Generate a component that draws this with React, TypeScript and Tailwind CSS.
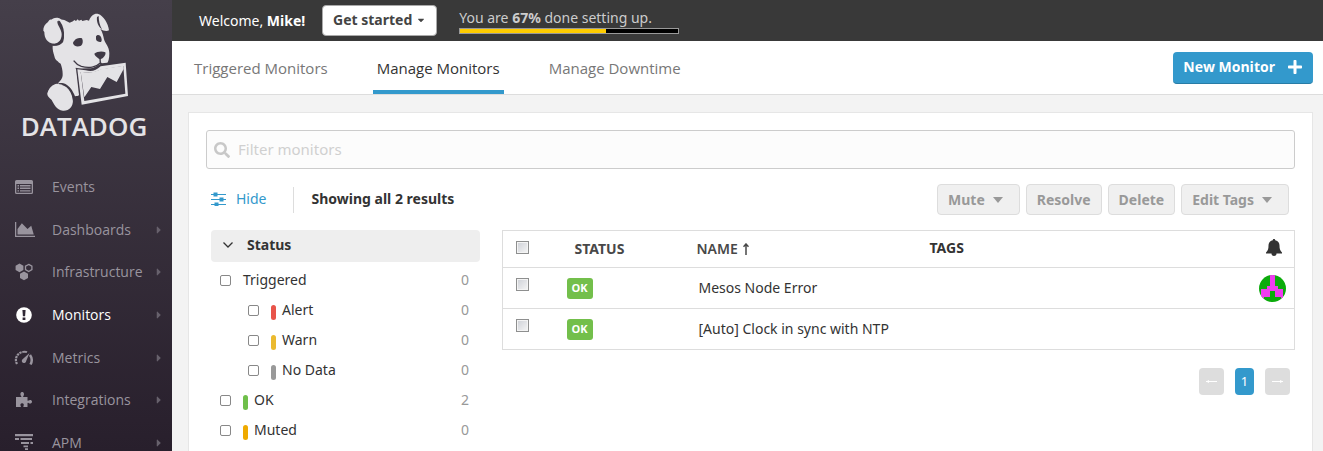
import type { ReactNode } from "react";
import { FaCaretDown, FaCaretRight, FaPlus, FaSearch } from "react-icons/fa";

function DogLogo() {
  return (
    <svg viewBox="126 36 270 300" className="ml-1 h-[100px] w-[90px]" fill="#e4e3e6" aria-hidden="true">
      <path d="M182 58 L196 60 L212 68 L222 64 L226 60 L231 63 L236 58 L240 62 L247 59 L250 63 L263 60 L270 62 C276 46 287 39 298 42 C312 46 328 70 330 91 C322 95 312 92 304 86 C311 97 313 108 315 118 C318 130 331 140 331 160 C331 176 328 186 322 194 L305 195 L309 189 C302 200 288 205 268 205 L230 206 L238 287 L228 289 C222 272 212 258 198 251 C190 248 182 249 176 251 C182 243 192 237 191 222 C191 210 188 200 185 191 C180 190 178 185 176 184 C170 181 167 174 166 168 C163 158 160 148 161 137 C172 139 188 136 193 124 C199 105 190 80 179 63 Z" />
      <path d="M178 54 C166 52 160 58 156 59 C152 58 150 62 147 66 C138 72 132 82 133 92 L136 96 C136 115 145 129 164 131 C179 131 188 120 188 103 C188 88 174 75 175 64 C178 62 184 60 188 61 C186 57 182 55 178 54 Z" />
      <path d="M180 64 C190 78 194 96 192 112 C189 128 176 136 162 134" fill="none" stroke="#3f3945" strokeWidth="5" />
      <path d="M178 254 C164 255 147 267 145 281 C145 290 153 294 158 300 C164 311 172 330 192 332 C211 333 222 320 222 300 C221 281 211 262 196 256 C190 253 184 253 178 254 Z" />
      <path d="M180 252 C204 251 221 274 224 304" fill="none" stroke="#3f3945" strokeWidth="4" />
      <path d="M146 282 C148 262 162 253 174 251 L190 254 L176 270 L160 300 Z" />
      <path d="M226 122 C231 114 241 112 249 115 C253 122 252 133 246 137 C237 141 226 140 223 132 C221 128 223 125 226 122 Z" fill="#3f3945" />
      <path d="M291 109 C295 103 300 104 304 108 C308 114 310 122 306 126 C300 127 292 124 291 118 Z" fill="#3f3945" />
      <path d="M286 161 C294 154 310 152 319 157 C322 164 313 176 304 178 C299 176 288 169 286 161 Z" fill="#3f3945" />
      <path d="M303 174 L304 189 C292 201 270 206 247 199 C235 195 229 189 224 182 M305 189 L309 194" fill="none" stroke="#3f3945" strokeWidth="4" />
      <path d="M294 51 C292 65 298 80 309 88 C302 77 299 61 299 48 Z" fill="#3f3945" />
      <path d="M230 203 L269 211 L309 190 L383 182 L391 289 L247 318 Z" fill="#3f3945" />
      <path fillRule="evenodd" d="M235 208 L260 211 C278 216 291 212 305 199 L380 188 L387 288 L248 314 Z M245 216 L256 303 L379 281 L373 198 L304 209 C287 218 268 219 245 216 Z" />
      <path d="M245 215 C269 219 287 218 304 208 L373 197 L374 207 L353 246 L325 231 L303 267 L277 261 L256 292 Z" />
      <path d="M226 207 L231 207 L240 286 L230 288 Z" />
    </svg>
  );
}

const glyph = "h-[18px] w-[20px]";

function EventsIcon() {
  return (
    <svg viewBox="0 0 20 18" className={glyph} fill="currentColor">
      <path fillRule="evenodd" d="M2.500 2h15A1.500 1.500 0 0 1 19 3.500v11a1.500 1.500 0 0 1-1.500 1.500h-15A1.500 1.500 0 0 1 1 14.500v-11A1.500 1.500 0 0 1 2.500 2zM2.300 6v8.700h15.400V6z" />
      <path d="M3.500 7H5v1.400H3.500zM6 7h10.500v1.400H6zM3.500 9.600H5V11H3.500zM6 9.600h10.500V11H6zM3.500 12.200H5v1.400H3.500zM6 12.200h10.500v1.400H6z" />
    </svg>
  );
}

function DashboardsIcon() {
  return (
    <svg viewBox="0 0 2048 1536" className="ml-px h-[15px] w-[20px]" fill="currentColor">
      <path d="M2048 1408v128H0V0h128v1408h1920zM1664 384l256 896H256V704l448-576 576 576z" />
    </svg>
  );
}

function InfrastructureIcon() {
  return (
    <svg viewBox="0 0 20 18" className={glyph} fill="currentColor">
      <path d="M5.500.500l3.900 2.200v4.200L5.500 9.200 1.600 6.900V2.700zM10 8.600l4 2.200v4.100l-4 2.300-4-2.300v-4.100z" />
      <path d="M14.700 1.400l3.200 1.800v3.400l-3.200 1.900-3.200-1.900V3.200z" fill="none" stroke="currentColor" strokeWidth="1.300" />
    </svg>
  );
}

function MonitorsIcon() {
  return (
    <svg viewBox="0 0 20 18" className={glyph}>
      <circle cx="10" cy="9" r="7.800" fill="currentColor" />
      <path d="M8.400 4h3.200l-.5 6.300H8.900zM8.600 11.500h2.800V14H8.600z" fill="#2f2735" />
    </svg>
  );
}

function MetricsIcon() {
  return (
    <svg viewBox="0 0 20 18" className={glyph} fill="none" stroke="currentColor">
      <path d="M3 15A8 8 0 0 1 9 3" strokeWidth="2.200" strokeDasharray="2.200 .8" />
      <path d="M9 3q2-.7 4 .2" strokeWidth="2" />
      <path d="M16 6q3.300 4.500.5 9.500" strokeWidth="2.500" />
      <path d="M15.500 4L12.200 12a2.200 2.200 0 1 1-3.600-1.800z" fill="currentColor" stroke="none" />
    </svg>
  );
}

function IntegrationsIcon() {
  return (
    <svg viewBox="0 0 20 18" className={glyph} fill="currentColor">
      <path d="M2 6h4.800c.6 0 .7-.5.3-1C5.800 3.500 6.400 1 8.200 1s2.400 2.500 1.200 4c-.4.500-.3 1 .3 1h3.800v3.200c0 .6.500.8 1 .4 1.500-1.200 3.500-.5 3.500 1.200s-2 2.400-3.500 1.200c-.5-.4-1-.2-1 .4V16H9.800c-.6 0-.7-.4-.4-.9.900-1.300.4-2.900-1.300-2.900s-2.200 1.600-1.300 2.900c.3.500.2.900-.4.900H2z" />
    </svg>
  );
}

function ApmIcon() {
  return (
    <svg viewBox="0 0 20 18" className={glyph} fill="currentColor">
      <path d="M1 0h18v2.200H1zM1 4h4v2H1zM6.500 4H18v2H6.500zM7 8h8v2H7zM16.500 8H19v2h-2.500zM9.500 11.500H14v1.800H9.500zM11 14.300h3V16h-3z" />
    </svg>
  );
}

function BellIcon() {
  return (
    <svg viewBox="0 0 16 17" className="h-[17px] w-[16px]" fill="currentColor" aria-hidden="true">
      <path d="M8 0c.8 0 1.200.5 1.200 1.200C12.300 1.700 13.500 4 13.500 6.500c0 3.500.5 5 2.500 7V14.500h-5.500a2.500 2.500 0 0 1-5 0H0V13.500c2-2 2.500-3.500 2.500-7 0-2.500 1.200-4.800 4.300-5.300C6.800.5 7.200 0 8 0z" />
    </svg>
  );
}

function SlidersIcon() {
  return (
    <svg viewBox="0 0 15 14" className="h-[14px] w-[15px]" fill="currentColor" aria-hidden="true">
      <path d="M0 2h15v1H0zM0 7h15v1H0zM0 12h15v1H0zM2.500.5h4v4h-4zM8.500 5.500h4v4h-4zM3.500 10.500h4V14h-4z" />
    </svg>
  );
}

type NavItem = { label: string; icon: ReactNode; arrow?: boolean; active?: boolean };

const navItems: NavItem[] = [
  { label: "Events", icon: <EventsIcon /> },
  { label: "Dashboards", icon: <DashboardsIcon />, arrow: true },
  { label: "Infrastructure", icon: <InfrastructureIcon />, arrow: true },
  { label: "Monitors", icon: <MonitorsIcon />, arrow: true, active: true },
  { label: "Metrics", icon: <MetricsIcon />, arrow: true },
  { label: "Integrations", icon: <IntegrationsIcon />, arrow: true },
  { label: "APM", icon: <ApmIcon />, arrow: true },
];

function Sidebar() {
  return (
    <aside className="flex w-[172px] shrink-0 flex-col overflow-hidden bg-linear-to-b from-[#453f4a] to-[#281f2c] font-['Open_Sans',sans-serif]">
      <a href="#home" className="flex h-[166px] shrink-0 flex-col items-center pt-3 pr-1">
        <DogLogo />
        <span className="text-[26px] leading-7 font-semibold text-[#e4e3e6]">DATADOG</span>
      </a>
      <nav className="grid h-[298px] shrink-0 grid-rows-7">
        {navItems.map((item) => (
          <a
            key={item.label}
            href={`#${item.label.toLowerCase()}`}
            className={
              item.active
                ? "flex items-center pr-[7px] pl-[14px] text-sm text-white"
                : "flex items-center pr-[7px] pl-[14px] text-sm text-[#99949e]"
            }
          >
            <span className="flex w-[38px] shrink-0 items-center">{item.icon}</span>
            <span className="flex-1">{item.label}</span>
            {item.arrow && <FaCaretRight className="size-3 shrink-0 text-[#67616c]" />}
          </a>
        ))}
      </nav>
    </aside>
  );
}

function TopBar() {
  return (
    <header className="flex h-[41px] shrink-0 items-center bg-[#393939] pl-[27px] text-sm text-white">
      <span className="w-[123px]">
        Welcome, <b>Mike!</b>
      </span>
      <button className="flex h-[31px] items-center gap-1 rounded border border-[#aaa] bg-white px-[10px] pb-[2px] font-bold text-[#444]">
        Get started <FaCaretDown className="size-[10px]" />
      </button>
      <div className="ml-[22px] w-[220px] text-[#ccc]">
        <p className="leading-5">
          You are <b>67%</b> done setting up.
        </p>
        <div
          role="progressbar"
          aria-label="Setup progress"
          aria-valuenow={67}
          className="h-[6px] border border-[#999] bg-black"
        >
          <div className="h-full w-[67%] bg-[#fc0]" />
        </div>
      </div>
    </header>
  );
}

function Tabs() {
  return (
    <div className="flex h-[54px] shrink-0 items-center justify-between border-b border-[#ddd] bg-white pr-[10px] pl-[18px] font-['Open_Sans',sans-serif]">
      <nav className="flex h-full gap-[41px] text-[15px] text-[#777]">
        <a href="#triggered" className="flex items-center border-b-4 border-transparent px-1 pt-[6px]">
          Triggered Monitors
        </a>
        <a href="#manage" className="flex items-center border-b-4 border-[#3399cc] px-1 pt-[6px] text-[#333]">
          Manage Monitors
        </a>
        <a href="#downtime" className="flex items-center border-b-4 border-transparent px-1 pt-[6px]">
          Manage Downtime
        </a>
      </nav>
      <button className="flex h-8 items-center gap-3 rounded border-b border-[#287ca6] bg-[#3399cc] px-[10px] text-sm font-bold text-white">
        New Monitor <FaPlus className="size-4" />
      </button>
    </div>
  );
}

type Facet = { label: string; count: number; bar?: string; nested?: boolean };

const facets: Facet[] = [
  { label: "Triggered", count: 0 },
  { label: "Alert", count: 0, bar: "bg-[#e8544a]", nested: true },
  { label: "Warn", count: 0, bar: "bg-[#ebba2f]", nested: true },
  { label: "No Data", count: 0, bar: "bg-[#999]", nested: true },
  { label: "OK", count: 2, bar: "bg-[#6fbf4a]" },
  { label: "Muted", count: 0, bar: "bg-[#efaa00]" },
];

function Facets() {
  return (
    <section className="ml-[5px] w-[269px] shrink-0">
      <button className="flex h-8 w-full items-center rounded-sm bg-[#eee] pb-[2px] pl-3 text-sm font-bold text-[#333]">
        <svg viewBox="0 0 10 6" className="mr-[14px] h-[6px] w-[10px]" fill="none" stroke="currentColor" strokeWidth="1.300">
          <path d="M.5.500L5 5 9.500.5" />
        </svg>
        Status
      </button>
      <ul className="pt-[3px]">
        {facets.map((facet) => (
          <li key={facet.label}>
            <label
              className={
                facet.nested
                  ? "flex h-[30px] items-center pr-[11px] pl-[37px] text-sm text-[#333]"
                  : "flex h-[30px] items-center pr-[11px] pl-[9px] text-sm text-[#333]"
              }
            >
              <input
                type="checkbox"
                className="mr-3 size-[11px] appearance-none rounded-xs border border-[#888] bg-white checked:bg-[#3399cc]"
              />
              {facet.bar && <span className={`mt-1 mr-[6px] h-[15px] w-[5px] rounded-full ${facet.bar}`} />}
              <span className="flex-1">{facet.label}</span>
              <span className="text-[#999]">{facet.count}</span>
            </label>
          </li>
        ))}
      </ul>
    </section>
  );
}

function RowCheckbox({ label }: { label: string }) {
  return (
    <input
      type="checkbox"
      aria-label={label}
      className="block size-[13px] appearance-none border border-[#8e8f8f] bg-linear-to-br from-[#cdd0d6] to-[#f6f6f6] shadow-[inset_0_0_0_1px_#f4f4f4] checked:bg-[#3399cc]"
    />
  );
}

function Avatar() {
  return (
    <svg viewBox="0 0 27 27" className="size-[27px]" role="img" aria-label="Creator">
      <clipPath id="avatar-circle">
        <circle cx="13.500" cy="13.500" r="13.500" />
      </clipPath>
      <g clipPath="url(#avatar-circle)">
        <path d="M0 0h27v27H0z" fill="#0cab0c" />
        <path d="M11 0h5v11h3v3h5v13h-2v-5h-6v-6h-5v6H5v5H2V14h6v-3h3z" fill="#f03cf0" />
      </g>
    </svg>
  );
}

const monitors = [
  { name: "Mesos Node Error", avatar: true },
  { name: "[Auto] Clock in sync with NTP", avatar: false },
];

function MonitorTable() {
  return (
    <table className="w-full table-fixed border-collapse border border-[#ddd] text-left text-sm text-[#333]">
      <colgroup>
        <col className="w-[64px]" />
        <col className="w-[130px]" />
        <col className="w-[233px]" />
        <col />
        <col className="w-[36px]" />
      </colgroup>
      <thead>
        <tr className="h-[37px] border-b border-[#ddd]">
          <th className="pb-1 pl-[13px]">
            <RowCheckbox label="Select all monitors" />
          </th>
          <th className="pl-2 font-bold text-[#484848]">STATUS</th>
          <th className="font-semibold text-[#484848]">
            <span className="flex items-center gap-[5px]">
              NAME
              <svg viewBox="0 0 6 12" className="h-3 w-[6px]" fill="none" stroke="currentColor" strokeWidth="1.500" role="img" aria-label="Sorted ascending">
                <path d="M3 12V1M.5 3.800L3 1l2.500 2.800" />
              </svg>
            </span>
          </th>
          <th className="pb-[2px] font-bold">TAGS</th>
          <th aria-label="Notifications" className="pb-1 pl-[7px]">
            <BellIcon />
          </th>
        </tr>
      </thead>
      <tbody>
        {monitors.map((monitor) => (
          <tr key={monitor.name} className="h-[41px] border-b border-[#ddd]">
            <td className="pb-2 pl-[13px]">
              <RowCheckbox label={`Select ${monitor.name}`} />
            </td>
            <td>
              <span className="flex h-[21px] w-[26px] items-center justify-center rounded-[3px] bg-[#73bf4b] font-['Open_Sans',sans-serif] text-[11px] font-bold text-white">
                OK
              </span>
            </td>
            <td className="pl-[2px] whitespace-nowrap">{monitor.name}</td>
            <td />
            <td>{monitor.avatar && <Avatar />}</td>
          </tr>
        ))}
      </tbody>
    </table>
  );
}

const plainButton =
  "flex h-[31px] items-center rounded border border-[#ddd] bg-[#f0f0f0] px-[10px] text-sm font-bold text-[#999]";
const menuButton =
  "flex h-[31px] items-center gap-2 rounded border border-[#ddd] bg-[#f0f0f0] pr-4 pl-[10px] text-sm font-bold text-[#999]";

function Triangle() {
  return (
    <svg viewBox="0 0 10 6" className="h-[6px] w-[10px]" fill="currentColor" aria-hidden="true">
      <path d="M0 0h10L5 6z" />
    </svg>
  );
}

function PageArrow({ path }: { path: string }) {
  return (
    <svg viewBox="0 0 11 5" className="mx-auto h-[5px] w-[11px]" aria-hidden="true">
      <path d="M0 2h11v1H0z" fill="currentColor" />
      <path d={path} fill="currentColor" />
    </svg>
  );
}

export default function App() {
  return (
    <div className="flex h-screen overflow-hidden bg-[#f3f3f3] font-['Noto_Sans',sans-serif]">
      <Sidebar />
      <div className="flex min-w-0 flex-1 flex-col">
        <TopBar />
        <Tabs />
        <main className="mt-[17px] mr-[10px] ml-4 flex-1 border border-b-0 border-[#e6e6e6] bg-white px-[17px] pt-[17px]">
          <label className="flex h-[39px] items-center gap-2 rounded-[3px] border border-[#ccc] bg-[#fcfcfc] pl-[7px] text-[#c8c8c8]">
            <FaSearch className="size-4" />
            <input
              type="text"
              aria-label="Filter monitors"
              placeholder="Filter monitors"
              className="flex-1 bg-transparent text-[15px] text-[#333] outline-none placeholder:text-[#d0d0d0]"
            />
          </label>
          <div className="flex h-[61px] items-center pr-[6px] pl-[5px] text-sm">
            <button className="flex items-center gap-[10px] pb-[2px] text-[#3399cc]">
              <SlidersIcon /> Hide
            </button>
            <div className="ml-[26px] flex h-[26px] items-center border-l border-[#ddd] pb-[2px] pl-[18px] font-bold text-[#333]">
              Showing all 2 results
            </div>
            <div className="ml-auto flex gap-[6px]">
              <button className={menuButton}>
                Mute <Triangle />
              </button>
              <button className={plainButton}>Resolve</button>
              <button className={plainButton}>Delete</button>
              <button className={menuButton}>
                Edit Tags <Triangle />
              </button>
            </div>
          </div>
          <div className="flex gap-[22px]">
            <Facets />
            <div className="min-w-0 flex-1">
              <MonitorTable />
              <nav aria-label="Pages" className="mt-[18px] mr-[5px] flex justify-end gap-[11px] text-[13px] text-white">
                <button aria-label="Previous page" className="h-[27px] w-[25px] rounded bg-[#ddd]">
                  <PageArrow path="M0 2.500L3 1v3z" />
                </button>
                <button className="h-[27px] w-[19px] rounded bg-[#3399cc]">1</button>
                <button aria-label="Next page" className="h-[27px] w-[25px] rounded bg-[#ddd]">
                  <PageArrow path="M11 2.500L8 1v3z" />
                </button>
              </nav>
            </div>
          </div>
        </main>
      </div>
    </div>
  );
}
